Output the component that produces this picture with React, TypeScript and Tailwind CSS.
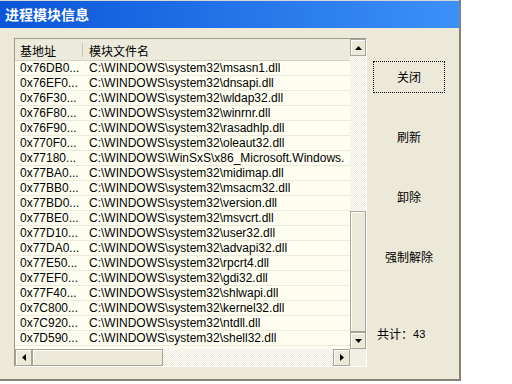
import React from "react";

const rows: [string, string][] = [
  ["0x76DB0...", "C:\\WINDOWS\\system32\\msasn1.dll"],
  ["0x76EF0...", "C:\\WINDOWS\\system32\\dnsapi.dll"],
  ["0x76F30...", "C:\\WINDOWS\\system32\\wldap32.dll"],
  ["0x76F80...", "C:\\WINDOWS\\system32\\winrnr.dll"],
  ["0x76F90...", "C:\\WINDOWS\\system32\\rasadhlp.dll"],
  ["0x770F0...", "C:\\WINDOWS\\system32\\oleaut32.dll"],
  ["0x77180...", "C:\\WINDOWS\\WinSxS\\x86_Microsoft.Windows."],
  ["0x77BA0...", "C:\\WINDOWS\\system32\\midimap.dll"],
  ["0x77BB0...", "C:\\WINDOWS\\system32\\msacm32.dll"],
  ["0x77BD0...", "C:\\WINDOWS\\system32\\version.dll"],
  ["0x77BE0...", "C:\\WINDOWS\\system32\\msvcrt.dll"],
  ["0x77D10...", "C:\\WINDOWS\\system32\\user32.dll"],
  ["0x77DA0...", "C:\\WINDOWS\\system32\\advapi32.dll"],
  ["0x77E50...", "C:\\WINDOWS\\system32\\rpcrt4.dll"],
  ["0x77EF0...", "C:\\WINDOWS\\system32\\gdi32.dll"],
  ["0x77F40...", "C:\\WINDOWS\\system32\\shlwapi.dll"],
  ["0x7C800...", "C:\\WINDOWS\\system32\\kernel32.dll"],
  ["0x7C920...", "C:\\WINDOWS\\system32\\ntdll.dll"],
  ["0x7D590...", "C:\\WINDOWS\\system32\\shell32.dll"],
];

// little black triangle for the scroll arrows
function Arrow({ dir }: { dir: "up" | "down" | "left" | "right" }) {
  const pts = {
    up: "0,4 7,4 3.5,0",
    down: "0,0 7,0 3.5,4",
    left: "4,0 4,7 0,3.5",
    right: "0,0 0,7 4,3.5",
  }[dir];
  const vertical = dir === "up" || dir === "down";
  return (
    <svg width={vertical ? 7 : 4} height={vertical ? 4 : 7} viewBox={vertical ? "0 0 7 4" : "0 0 4 7"}>
      <polygon points={pts} fill="#000" />
    </svg>
  );
}

function ScrollBtn({ dir, className }: { dir: "up" | "down" | "left" | "right"; className: string }) {
  return (
    <div
      className={
        "flex items-center justify-center bg-[#ece9d8] border border-[#a7a598] shadow-[inset_1px_1px_0_#ffffff] " +
        className
      }
    >
      <Arrow dir={dir} />
    </div>
  );
}

const checker =
  "bg-[repeating-conic-gradient(#ece9d8_0%_25%,#ffffff_0%_50%)] bg-[length:2px_2px]";

export default function App() {
  return (
    <div className="w-[512px] h-[384px] bg-white text-[12px] text-black font-['Liberation_Sans','Noto_Sans_CJK_SC',sans-serif]">
      <div className="w-[461px] h-[381px] flex flex-col bg-[#ece9d8] border-r-2 border-b-2 border-[#858378]">
        {/* title bar */}
        <div className="h-[28px] shrink-0 border-t border-[#d8d8d8] bg-gradient-to-r from-[#0a55d8] to-[#3d90f8] flex items-center pl-[5px] text-white font-bold text-[14px] font-['Noto_Sans_CJK_SC',sans-serif]">
          进程模块信息
        </div>

        <div className="flex flex-1 pt-[10px] pl-[14px]">
          {/* module list */}
          <div className="w-[353px] h-[329px] flex flex-col border border-[#9d9b90] border-r-white border-b-white">
            <div className="flex h-[310px]">
              <div className="w-[335px] flex flex-col bg-[#fefef0] overflow-hidden">
                <div className="h-[22px] shrink-0 flex items-center pt-[2px] bg-[#ebeadb] border-b border-[#d6d3c3] font-['Noto_Sans_CJK_SC',sans-serif]">
                  <div className="w-[68px] h-full flex items-center pl-[5px] relative">
                    基地址
                    <span className="absolute right-0 top-[2px] bottom-[3px] w-px bg-[#c7c5b2]" />
                  </div>
                  <div className="pl-[6px]">模块文件名</div>
                </div>
                {rows.map(([addr, path]) => (
                  <div
                    key={addr}
                    className="h-[15px] shrink-0 flex items-center pt-px border-b border-[#ebeadc] leading-[13px] whitespace-nowrap"
                  >
                    <div className="w-[68px] shrink-0 pl-[5px]">{addr}</div>
                    <div className="pl-[6px] overflow-hidden">{path}</div>
                  </div>
                ))}
              </div>
              {/* vertical scrollbar */}
              <div className="w-[16px] flex flex-col">
                <ScrollBtn dir="up" className="h-[17px]" />
                <div className={"h-[155px] " + checker} />
                <div className="h-[121px] bg-[#ece9d8] border border-[#a7a598] shadow-[inset_1px_1px_0_#ffffff]" />
                <ScrollBtn dir="down" className="h-[17px]" />
              </div>
            </div>
            {/* horizontal scrollbar */}
            <div className="flex h-[17px]">
              <ScrollBtn dir="left" className="w-[17px]" />
              <div className="w-[131px] bg-[#ece9d8] border border-[#a7a598] shadow-[inset_1px_1px_0_#ffffff]" />
              <div className={"w-[170px] " + checker} />
              <ScrollBtn dir="right" className="w-[17px]" />
              <div className="w-[16px] bg-[#f1efe4]" />
            </div>
          </div>

          {/* buttons */}
          <div className="flex flex-col pl-[6px] pt-[23px] font-['Noto_Sans_CJK_SC',sans-serif]">
            <div className="flex flex-col gap-[28px]">
              <div className="w-[72px] h-[32px] flex items-center justify-center border border-dotted border-black">
                关闭
              </div>
              <div className="w-[72px] h-[32px] flex items-center justify-center">刷新</div>
              <div className="w-[72px] h-[32px] flex items-center justify-center">卸除</div>
              <div className="w-[72px] h-[32px] flex items-center justify-center">强制解除</div>
            </div>
            <div className="mt-[54px] pl-[4px] leading-[14px] flex items-center">
              共计：<span className="text-[11px] font-['Liberation_Sans',sans-serif]">43</span>
            </div>
          </div>
        </div>
      </div>
    </div>
  );
}
